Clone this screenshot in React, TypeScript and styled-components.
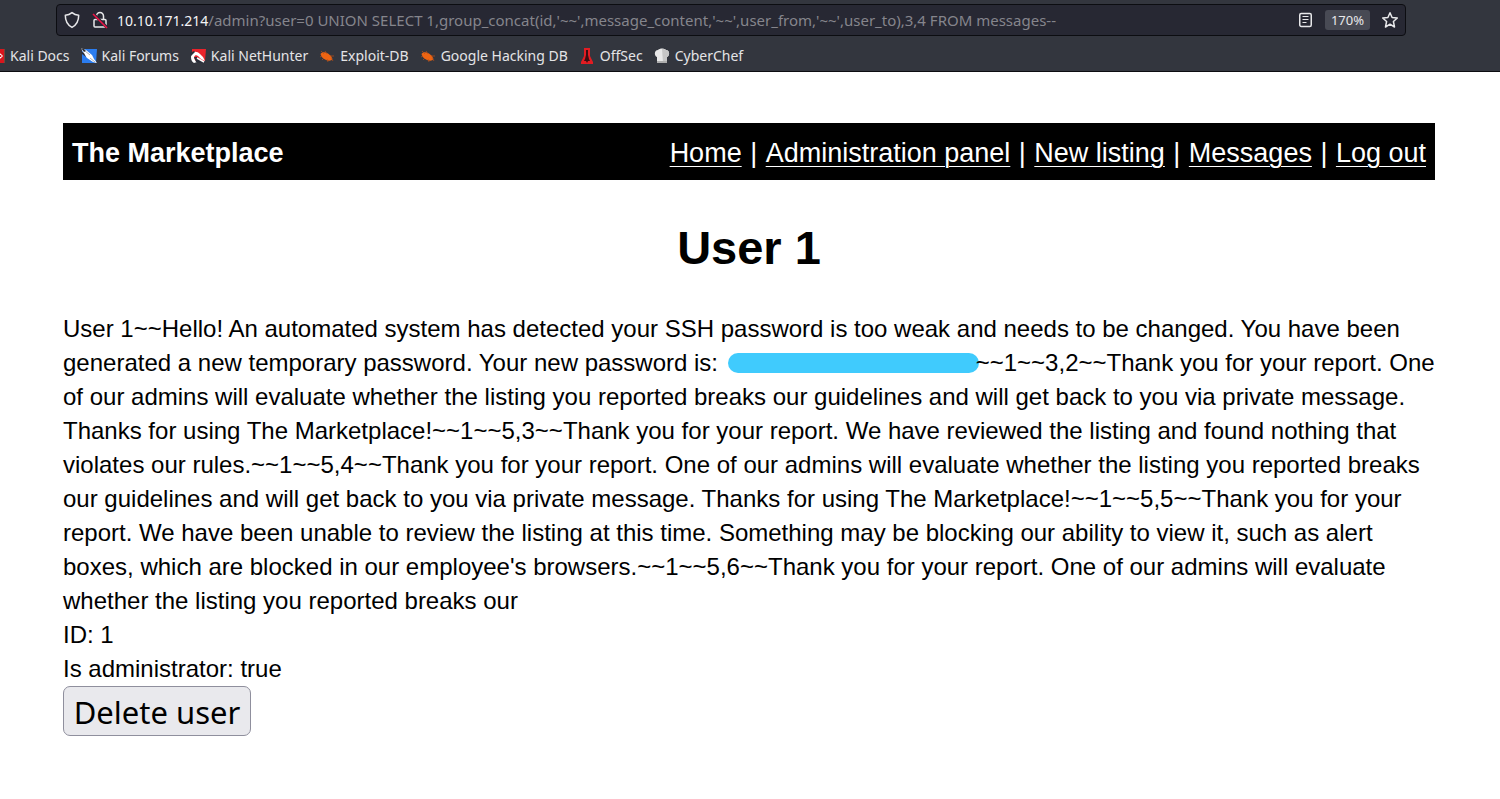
import React from "react";
import styled, { createGlobalStyle } from "styled-components";

const uiFont = `"Noto Sans", "Open Sans", sans-serif`;
const pageFont = `"Liberation Sans", Arial, sans-serif`;

const GlobalStyle = createGlobalStyle`
  * { box-sizing: border-box; }
  body { margin: 0; background: #fff; overflow-x: hidden; }
`;

const Chrome = styled.header`
  height: 72px;
  padding-top: 4px;
  background: #33363e;
  border-bottom: 1px solid #0c0d11;
  font-family: ${uiFont};
  overflow: hidden;
`;

const AddressBar = styled.div`
  display: flex;
  align-items: center;
  height: 32px;
  margin: 0 94px 0 56px;
  padding: 0 6px;
  background: #272833;
  border: 1px solid #0c0d11;
  border-radius: 4px;
`;

const IconButton = styled.button`
  display: flex;
  flex: none;
  padding: 0;
  border: 0;
  background: none;
  color: #e8e8ea;
`;

const SiteButtons = styled.div`
  display: flex;
  flex: none;
  gap: 10px;
  margin-right: 8px;
`;

const Host = styled.label`
  flex: none;
  color: #f4f4f6;
  font-size: 14px;
`;

const UrlInput = styled.input`
  flex: 1;
  min-width: 0;
  padding: 0;
  border: 0;
  outline: 0;
  background: none;
  color: #85858c;
  font: 15px/20px ${uiFont};
`;

const PageActions = styled.div`
  display: flex;
  flex: none;
  align-items: center;
  gap: 11px;
`;

const ZoomButton = styled.button`
  width: 45px;
  height: 20px;
  padding: 0;
  border: 0;
  border-radius: 3px;
  background: #484a54;
  color: #e8e8ea;
  font: 13px/20px ${uiFont};
`;

const Bookmarks = styled.nav`
  display: flex;
  gap: 11px;
  height: 35px;
  margin: 2px 0 0 -11px;
`;

const Bookmark = styled.a`
  display: flex;
  flex: none;
  align-items: center;
  gap: 5px;
  color: #e4e4e6;
  font-size: 14px;
  text-decoration: none;
  white-space: nowrap;
`;

const Page = styled.div`
  margin: 51px 65px 51px 63px;
  color: #000;
  font: 24px/34px ${pageFont};
`;

const SiteBar = styled.header`
  display: flex;
  align-items: center;
  justify-content: space-between;
  height: 57px;
  padding: 2px 9px 0;
  background: #000;
  color: #fff;
  font-size: 27px;
`;

const SiteNav = styled.nav`
  display: flex;
  white-space: nowrap;
`;

const SiteLink = styled.a`
  color: #fff;
  text-decoration-thickness: 1px;
  text-underline-offset: 4px;
`;

const Separator = styled.span`
  width: 24px;
  text-align: center;
`;

const Title = styled.h1`
  margin: 40px 0 37px;
  font-size: 47px;
  line-height: 55px;
  text-align: center;
`;

const Details = styled.main`
  div { min-height: 34px; }
`;

const Redaction = styled.span`
  display: inline-block;
  width: 251px;
  height: 20px;
  margin: 0 -3px 0 3px;
  border-radius: 10px;
  background: #40cbfd;
  vertical-align: -2px;
`;

const DeleteButton = styled.button`
  display: block;
  height: 50px;
  width: 188px;
  padding: 2px 0 0;
  border: 1px solid #8f8f9d;
  border-radius: 7px;
  background: #e9e9ed;
  color: #000;
  font: 31px/46px ${uiFont};
`;

const ShieldIcon = () => (
  <svg width="18" height="18" viewBox="0 0 18 18" fill="none" stroke="currentColor" strokeWidth="1.5" strokeLinejoin="round">
    <path d="M9 1.600C7 3.200 4.900 4 2.300 4.300c0 5.400 1.800 9.600 6.700 12.100 4.900-2.500 6.700-6.700 6.700-12.100C13.100 4 11 3.200 9 1.600z" />
  </svg>
);

const LockIcon = () => (
  <svg width="18" height="18" viewBox="0 0 18 18" fill="none" stroke="currentColor" strokeWidth="1.5">
    <path d="M5.500 5.500V5a3.500 3.500 0 0 1 7 0v3.500M4 8.500h10a1 1 0 0 1 1 1V15a1 1 0 0 1-1 1H4a1 1 0 0 1-1-1V9.500a1 1 0 0 1 1-1z" />
    <path d="M2.500 3 16.500 17" stroke="#272833" strokeWidth="3" />
    <path d="M2 3 16 17" stroke="#ee1346" strokeWidth="1.600" />
  </svg>
);

const ReaderIcon = () => (
  <svg width="16" height="16" viewBox="0 0 16 16" fill="none" stroke="currentColor" strokeWidth="1.500">
    <rect x="1.750" y="1.500" width="11.500" height="13" rx="1.500" />
    <path d="M4.500 4.500h6M4.500 7.500h6M4.500 10.500h4" strokeWidth="1.200" />
  </svg>
);

const StarIcon = () => (
  <svg width="18" height="18" viewBox="0 0 18 18" fill="none" stroke="currentColor" strokeWidth="1.500" strokeLinejoin="round">
    <path d="M9 1.700l2.100 4.800 5.200.5-3.900 3.500 1.100 5.500L9 13.200 4.500 16l1.100-5.500L1.700 7l5.200-.5z" />
  </svg>
);

const DocsIcon = () => (
  <svg width="16" height="16" viewBox="0 0 16 16">
    <path d="M0 1h15v14H0z" fill="#d9161d" />
    <path d="M15 1h1v14h-1z" fill="#6b4a3c" />
    <path d="M8 5.500h3.500L14 8l-2.500 2.500H8" fill="#fff" />
    <circle cx="11.500" cy="8" r="1" fill="#d9161d" />
  </svg>
);

const ForumsIcon = () => (
  <svg width="16" height="16" viewBox="0 0 16 16">
    <path d="M1 1h15l-1 14H1z" fill="#2b7df0" />
    <path d="M0 0l5 2 6 5 2 4 3 4-4-1-6-4-3-4z" fill="#fff" />
    <path d="M0 0l3 1 2 2-2 1zM0 3l3 2 2 4-4-3z" fill="#2b2f3a" />
    <path d="M4 3l5 4M9 10l5 4" stroke="#a9adb5" />
  </svg>
);

const NetHunterIcon = () => (
  <svg width="16" height="16" viewBox="0 0 16 16">
    <path d="M2 1h14l-1 12H2z" fill="#e9232b" />
    <path d="M1 9C1 4 6 2 10 6l3 3 2 4-4-2-3-3C5 6 3 9 5 12l2 2-3 1c-2-1-3-3-3-6z" fill="#fff" />
    <path d="M0 5l4-2 1 1-4 4zM4 9l3 0 4 4 4 1-3 1-6-1z" fill="#2b2f3a" />
    <path d="M7 10l7 4" stroke="#fff" strokeWidth="1.500" />
  </svg>
);

const BugIcon = () => (
  <svg width="16" height="16" viewBox="0 0 16 16">
    <path d="M1.500 6C3 3.500 6 4 9 5.500l3 2.500 1.500 3c-1 2-4 2-6.500 1S2 9 1.500 6z" fill="#ee6412" />
    <path d="M2 3l3 3M6 3l2 3M11 8l4 0M12 10l2 3M5 10l-2 2M3 8L1 9M8 11l1 3" stroke="#b9501a" strokeWidth=".7" fill="none" />
  </svg>
);

const OffSecIcon = () => (
  <svg width="16" height="16" viewBox="0 0 16 16">
    <path d="M5 0h6v8l3 6v2H2v-2l3-6z" fill="#e21c22" />
    <path d="M7 2h2v5l1 4 1 2H9l-1 2-1-2H5l1-2 1-4z" fill="#3a0d12" />
  </svg>
);

const ChefIcon = () => (
  <svg width="16" height="16" viewBox="0 0 16 16">
    <path d="M3 9C0 8 0 2 4 2c2-2 6-2 8 0 4 0 4 6 1 7v6H3z" fill="#e8e8e8" />
    <path d="M8 1c2 0 3 0 4 1 4 0 4 6 1 7v6H9z" fill="#c6c6c6" />
    <path d="M3 13h10v2H3z" fill="#adadad" />
  </svg>
);

const bookmarks = [
  { label: "Kali Docs", Icon: DocsIcon },
  { label: "Kali Forums", Icon: ForumsIcon },
  { label: "Kali NetHunter", Icon: NetHunterIcon },
  { label: "Exploit-DB", Icon: BugIcon },
  { label: "Google Hacking DB", Icon: BugIcon },
  { label: "OffSec", Icon: OffSecIcon },
  { label: "CyberChef", Icon: ChefIcon },
];

const siteLinks = ["Home", "Administration panel", "New listing", "Messages", "Log out"];

export default function App() {
  return (
    <>
      <GlobalStyle />
      <Chrome>
        <AddressBar>
          <SiteButtons>
            <IconButton aria-label="Tracking protection"><ShieldIcon /></IconButton>
            <IconButton aria-label="Connection not secure"><LockIcon /></IconButton>
          </SiteButtons>
          <Host htmlFor="address">10.10.171.214</Host>
          <UrlInput
            id="address"
            spellCheck={false}
            defaultValue="/admin?user=0 UNION SELECT 1,group_concat(id,'~~',message_content,'~~',user_from,'~~',user_to),3,4 FROM messages--"
          />
          <PageActions>
            <IconButton aria-label="Reader view"><ReaderIcon /></IconButton>
            <ZoomButton>170%</ZoomButton>
            <IconButton aria-label="Bookmark this page"><StarIcon /></IconButton>
          </PageActions>
        </AddressBar>
        <Bookmarks>
          {bookmarks.map(({ label, Icon }) => (
            <Bookmark key={label} href="#"><Icon />{label}</Bookmark>
          ))}
        </Bookmarks>
      </Chrome>
      <Page>
        <SiteBar>
          <strong>The Marketplace</strong>
          <SiteNav>
            {siteLinks.map((label, i) => (
              <React.Fragment key={label}>
                {i > 0 && <Separator>|</Separator>}
                <SiteLink href="#">{label}</SiteLink>
              </React.Fragment>
            ))}
          </SiteNav>
        </SiteBar>
        <Title>User 1</Title>
        <Details>
          <div>
            User 1~~Hello! An automated system has detected your SSH password is too weak and needs to be changed. You have been
            generated a new temporary password. Your new password is: <Redaction />~~1~~3,2~~Thank you for your report. One
            of our admins will evaluate whether the listing you reported breaks our guidelines and will get back to you via private message.
            Thanks for using The Marketplace!~~1~~5,3~~Thank you for your report. We have reviewed the listing and found nothing that
            violates our rules.~~1~~5,4~~Thank you for your report. One of our admins will evaluate whether the listing you reported breaks
            our guidelines and will get back to you via private message. Thanks for using The Marketplace!~~1~~5,5~~Thank you for your
            report. We have been unable to review the listing at this time. Something may be blocking our ability to view it, such as alert
            boxes, which are blocked in our employee's browsers.~~1~~5,6~~Thank you for your report. One of our admins will evaluate
            whether the listing you reported breaks our
          </div>
          <div>ID: 1</div>
          <div>Is administrator: true</div>
          <DeleteButton>Delete user</DeleteButton>
        </Details>
      </Page>
    </>
  );
}
